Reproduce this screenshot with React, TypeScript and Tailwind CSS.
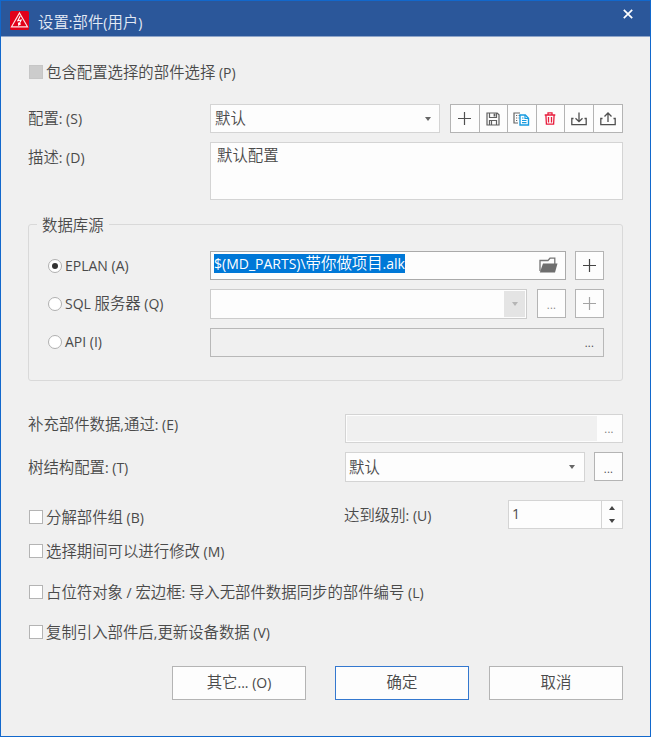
import type { ReactNode } from "react";
import clsx from "clsx";

const CJK_RUN = /([\u4e00-\u9fff]+)/;

// Han characters are set slightly larger than the Latin text around them.
function Mixed({ text, className }: { text: string; className?: string }) {
  return (
    <span className={clsx("inline-flex items-baseline whitespace-pre text-[14px] leading-5", className)}>
      {text.split(CJK_RUN).map((part, index) =>
        CJK_RUN.test(part) ? (
          <span key={index} className="text-[15.4px] font-[350]">
            {part}
          </span>
        ) : (
          <span key={index}>{part}</span>
        ),
      )}
    </span>
  );
}

function Checkbox({ text, disabled, className }: { text: string; disabled?: boolean; className?: string }) {
  return (
    <label className={clsx("flex h-5 items-center gap-[3px]", className)}>
      <span
        className={clsx(
          "ml-px size-3.5 shrink-0 border",
          disabled ? "border-[#c6c6c6] bg-[#cccccc]" : "border-[#b4b4b4] bg-white",
        )}
      />
      <Mixed text={text} className="pt-px" />
    </label>
  );
}

function Radio({ text, checked }: { text: string; checked?: boolean }) {
  return (
    <label className="flex w-[162px] shrink-0 items-center gap-[3px]">
      <span className="flex size-3.5 shrink-0 items-center justify-center rounded-full border border-[#b0b0b0] bg-white">
        {checked && <span className="size-1.5 rounded-full bg-[#333333]" />}
      </span>
      <Mixed text={text} />
    </label>
  );
}

function IconButton({ children, className }: { children: ReactNode; className?: string }) {
  return (
    <button
      type="button"
      className={clsx("flex h-[29px] w-[29px] shrink-0 items-center justify-center border border-[#b4b4b4] bg-[#fdfdfd]", className)}
    >
      {children}
    </button>
  );
}

function Dots({ className }: { className?: string }) {
  return <span className={clsx("text-[11px] leading-3 tracking-[0.2px]", className)}>...</span>;
}

function Caret({ up, className }: { up?: boolean; className?: string }) {
  return (
    <svg viewBox="0 0 6 4" className={clsx("h-1 w-1.5 fill-current", className)}>
      <path d={up ? "M0 4L3 0L6 4Z" : "M0 0L3 4L6 0Z"} />
    </svg>
  );
}

function PlusIcon() {
  return (
    <svg viewBox="0 0 13 13" className="size-[13px]" fill="none" stroke="currentColor" strokeWidth="1.2">
      <path d="M6.5 0V13M0 6.5H13" />
    </svg>
  );
}

function SaveIcon() {
  return (
    <svg viewBox="0 0 14 14" className="size-3.5" fill="none" stroke="#606060" strokeWidth="1.2">
      <path d="M1 1H11.2L13 2.8V13H1ZM3.5 1V5.5H10.5V1M3.5 13V8.5H10.5V13M5.5 8.5V13" />
      <path d="M8.5 1.5V4.5" strokeWidth="1.8" />
    </svg>
  );
}

function CopyIcon() {
  return (
    <svg viewBox="0 0 17 14" className="h-3.5 w-[17px]" fill="none">
      <path d="M7 1H1V11H5" stroke="#666666" strokeWidth="1.2" />
      <path d="M3 3.5H4.2M3 6H4.2M3 8.5H4.2M5.6 3.5H7M5.6 6H6.4" stroke="#666666" strokeWidth="1.1" />
      <path d="M7 3H12.3L15.5 6.2V13H7Z" fill="white" stroke="#179be0" strokeWidth="1.4" />
      <path d="M12 3V6.5H15.5M9 6H10.5M9 8.5H13.5M9 10.7H13.5" stroke="#179be0" strokeWidth="1.2" />
    </svg>
  );
}

function TrashIcon() {
  return (
    <svg viewBox="0 0 12 13" className="h-[13px] w-3" fill="none" stroke="#e81c3c" strokeWidth="1.3">
      <path d="M0.7 3H11.3M4 2.7V0.8H8V2.7M1.9 3L2.4 12.2H9.6L10.1 3M4.5 5V10.5M7.5 5V10.5" />
    </svg>
  );
}

function TrayIcon({ up }: { up?: boolean }) {
  return (
    <svg viewBox="0 0 16 14" className="h-3.5 w-4" fill="none" stroke="#505050" strokeWidth="1.3">
      <path d="M2.5 6.5H0.8V12.7H15.2V6.5H13.5" />
      <path d={up ? "M8 10V1.2M4.5 4.5L8 1L11.5 4.5" : "M8 0.5V9.5M4.5 6.2L8 9.7L11.5 6.2"} />
    </svg>
  );
}

function FolderIcon() {
  return (
    <svg viewBox="0 0 19 16" className="h-4 w-[19px]">
      <path d="M1 14V3.5H9L11 1.2H15.8V7" fill="none" stroke="#757575" strokeWidth="1.3" />
      <path d="M4 6.5H18.5L16 15.5H0.8Z" fill="#6e6e6e" />
    </svg>
  );
}

function AppIcon() {
  return (
    <svg viewBox="0 0 19 19" className="size-[19px]">
      <rect width="19" height="19" rx="1.5" fill="#e2001a" />
      <path d="M9.5 2L17.5 15.8H1.5Z" fill="none" stroke="#ffe4e6" strokeWidth="1.2" />
      <path d="M10.2 5L7.8 9.7L11.2 9L8.8 13.6M8.4 11.6L8.7 14L10.8 12.7" fill="none" stroke="white" strokeWidth="1.1" />
    </svg>
  );
}

function TitleBar() {
  return (
    <header className="flex h-9 shrink-0 border-b border-[#8fa5c9] bg-[#2b579a] pl-[9px] text-[#e3eaf5]">
      <div className="mt-2.5">
        <AppIcon />
      </div>
      <Mixed text="设置:部件(用户)" className="mt-3 ml-[9px] h-5" />
      <button type="button" className="mt-2 mr-[17px] ml-auto h-2.5 w-2.5 text-white">
        <svg viewBox="0 0 10 10" className="size-2.5" fill="none" stroke="currentColor" strokeWidth="1.7">
          <path d="M0.8 0.8L9.2 9.2M9.2 0.8L0.8 9.2" />
        </svg>
      </button>
    </header>
  );
}

function DatabaseSource() {
  return (
    <fieldset className="relative mt-6 h-[157px] rounded-[3px] border border-[#d9d9d9] pt-[26px] pl-[19px]">
      <div className="absolute -top-3 left-2 bg-[#f0f0f0] px-[5px]">
        <Mixed text="数据库源" />
      </div>
      <div className="flex h-[29px] items-center">
        <Radio text="EPLAN (A)" checked />
        <div className="flex h-[29px] w-[356px] items-center justify-between border border-[#aaaaaa] bg-[#fdfdfd] pr-[7px] pl-[3px]">
          <span className="-mt-1 flex h-[19px] items-center bg-[#0078d7] text-white">
            <Mixed text="$(MD_PARTS)\带你做项目.alk" />
          </span>
          <div className="-mt-0.5">
            <FolderIcon />
          </div>
        </div>
        <IconButton className="ml-[9px] text-[#444444]">
          <PlusIcon />
        </IconButton>
      </div>
      <div className="mt-[9px] flex h-[30px] items-start">
        <div className="flex h-[30px] items-center">
          <Radio text="SQL 服务器 (Q)" />
        </div>
        <div className="flex h-[30px] w-[317px] justify-end border border-[#cccccc] bg-[#fdfdfd] p-px">
          <span className="flex w-[21px] items-center justify-center bg-[#e4e4e4] text-[#b5b5b5]">
            <Caret />
          </span>
        </div>
        <IconButton className="ml-2.5 text-[#888888]">
          <Dots className="mt-0.5" />
        </IconButton>
        <IconButton className="ml-[9px] text-[#a3a3a3]">
          <PlusIcon />
        </IconButton>
      </div>
      <div className="mt-2 flex h-[30px] items-end">
        <div className="flex h-[30px] items-center">
          <Radio text="API (I)" />
        </div>
        <div className="flex h-[29px] w-[394px] items-center justify-end border border-[#b8b8b8] bg-[#f0f0f0] pr-[9px]">
          <Dots />
        </div>
      </div>
    </fieldset>
  );
}

function DialogButton({ text, primary }: { text: string; primary?: boolean }) {
  return (
    <button
      type="button"
      className={clsx(
        "flex h-[34px] w-[134px] items-center justify-center border bg-[#fdfdfd]",
        primary ? "border-[#3478cf]" : "border-[#b4b4b4]",
      )}
    >
      <Mixed text={text} />
    </button>
  );
}

export default function App() {
  return (
    <div className="flex h-[737px] w-[651px] flex-col border border-[#1268cc] bg-[#f0f0f0] font-['Open_Sans','Noto_Sans_CJK_SC',sans-serif] text-[#4a4a4a]">
      <TitleBar />
      <main className="flex flex-col pr-[27px] pl-[27px]">
        <Checkbox text="包含配置选择的部件选择 (P)" disabled className="mt-[25px]" />

        <div className="mt-[22px] flex h-[29px] items-center">
          <Mixed text="配置: (S)" className="w-[182px] pt-px" />
          <div className="flex h-[29px] w-[230px] items-center justify-between border border-[#d4d4d4] bg-[#fdfdfd] pr-2 pl-1">
            <Mixed text="默认" />
            <Caret className="text-[#666666]" />
          </div>
          <div className="ml-2.5 grid h-[29px] w-[173px] grid-cols-6 divide-x divide-[#b4b4b4] border border-[#b4b4b4] bg-[#fdfdfd] text-[#505050]">
            {[
              <PlusIcon key="add" />,
              <SaveIcon key="save" />,
              <CopyIcon key="copy" />,
              <TrashIcon key="delete" />,
              <TrayIcon key="import" />,
              <TrayIcon key="export" up />,
            ].map((icon) => (
              <button key={icon.key} type="button" className="flex items-center justify-center">
                {icon}
              </button>
            ))}
          </div>
        </div>

        <div className="mt-[9px] flex h-[58px]">
          <Mixed text="描述: (D)" className="mt-1.5 h-5 w-[182px]" />
          <div className="flex-1 border border-[#d4d4d4] bg-[#fdfdfd] pl-1.5">
            <Mixed text="默认配置" />
          </div>
        </div>

        <DatabaseSource />

        <div className="mt-[33px] flex h-[29px]">
          <Mixed text="补充部件数据,通过: (E)" className="mt-px h-5 w-[317px]" />
          <div className="flex flex-1 border border-[#d4d4d4] bg-[#fdfdfd] p-px">
            <span className="flex-1 bg-[#f0f0f0]" />
            <span className="flex w-6 items-center justify-center text-[#777777]">
              <Dots />
            </span>
          </div>
        </div>

        <div className="mt-[9px] flex h-[30px]">
          <Mixed text="树结构配置: (T)" className="mt-1.5 h-5 w-[317px]" />
          <div className="flex w-60 items-center justify-between border border-[#d4d4d4] bg-[#fdfdfd] pr-[9px] pl-[3px]">
            <Mixed text="默认" className="pt-0.5" />
            <Caret className="text-[#666666]" />
          </div>
          <IconButton className="ml-[9px]">
            <Dots className="mt-1" />
          </IconButton>
        </div>

        <div className="mt-[18px] flex h-[29px]">
          <Checkbox text="分解部件组 (B)" className="mt-[7px] w-[316px]" />
          <Mixed text="达到级别: (U)" className="mt-1.5 h-5 w-[164px]" />
          <div className="flex flex-1 border border-[#d4d4d4] bg-[#fdfdfd]">
            <span className="flex-1 border-r border-[#d4d4d4] pt-[3px] pl-[3px] text-[14px] leading-5">1</span>
            <span className="flex w-5 flex-col items-center justify-center gap-[9px] text-[#444444]">
              <Caret up />
              <Caret />
            </span>
          </div>
        </div>

        <Checkbox text="选择期间可以进行修改 (M)" className="mt-3" />
        <Checkbox text="占位符对象 / 宏边框: 导入无部件数据同步的部件编号 (L)" className="mt-[21px]" />
        <Checkbox text="复制引入部件后,更新设备数据 (V)" className="mt-5" />

        <div className="mt-6 flex justify-end">
          <DialogButton text="其它... (O)" />
          <div className="ml-[29px] flex gap-5">
            <DialogButton text="确定" primary />
            <DialogButton text="取消" />
          </div>
        </div>
      </main>
    </div>
  );
}
